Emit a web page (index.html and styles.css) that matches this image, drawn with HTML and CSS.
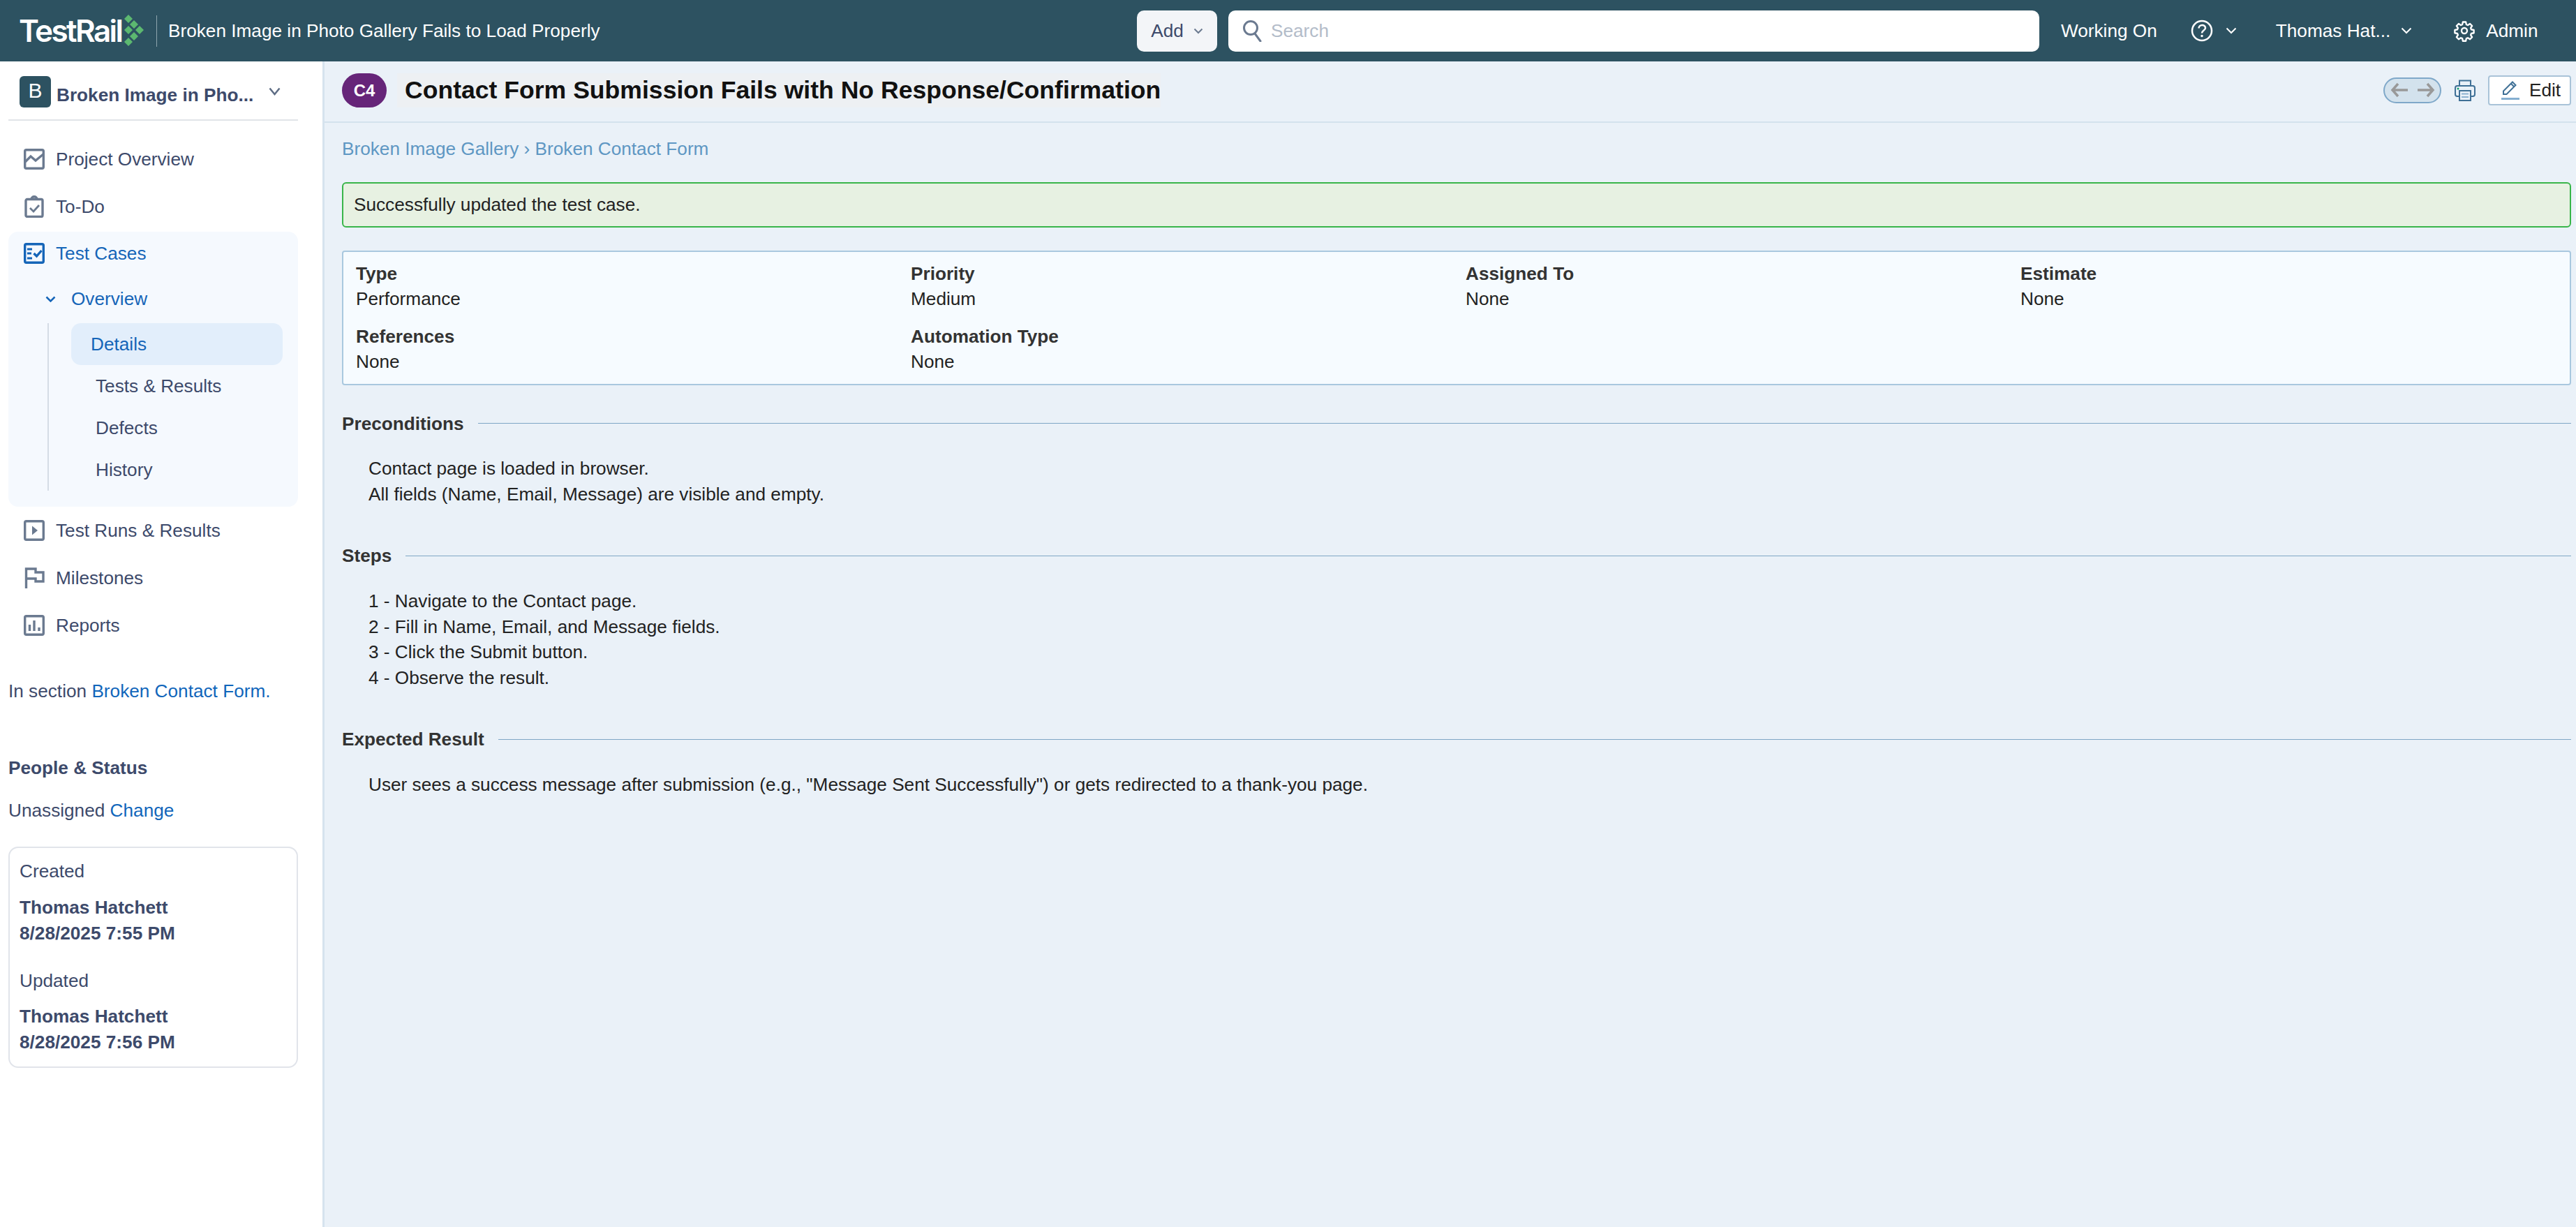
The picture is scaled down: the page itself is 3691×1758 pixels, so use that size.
FILE: index.html
```html
<!DOCTYPE html>
<html lang="en">
<head>
    <meta charset="UTF-8">
    <meta name="viewport" content="width=device-width, initial-scale=1.0">
    <title>Contact Form Submission Fails with No Response/Confirmation</title>
    <link rel="stylesheet" href="styles.css">
</head>
<body>
    <!-- Top bar -->
    <header class="topbar">
        <div class="brand">
            <span class="brand-name">TestRail</span>
            <svg class="brand-mark" width="40" height="46" viewBox="0 0 40 46">
                <g fill="#5cb870">
                    <path d="M12 0l6 6-6 6-6-6z"/>
                    <path d="M20 8l6 6-6 6-6-6z"/>
                    <path d="M12 16l6 6-6 6-6-6z"/>
                    <path d="M28 16l6 6-6 6-6-6z"/>
                    <path d="M20 25l6 6-6 6-6-6z"/>
                    <path d="M12 33l6 6-6 6-6-6z"/>
                </g>
            </svg>
        </div>
        <div class="project-title">Broken Image in Photo Gallery Fails to Load Properly</div>
        <button class="add-button">Add
            <svg width="14" height="9" viewBox="0 0 14 9"><path d="M1.500 1.500L7 7l5.500-5.500" fill="none" stroke="#6b7a90" stroke-width="2"/></svg>
        </button>
        <div class="search-box">
            <svg width="30" height="32" viewBox="0 0 30 32"><circle cx="12" cy="12" r="9.500" fill="none" stroke="#6b7a90" stroke-width="3"/><path d="M18 20l8 11" stroke="#6b7a90" stroke-width="3" stroke-linecap="round"/></svg>
            <span class="search-hint">Search</span>
        </div>
        <span class="top-link working-on">Working On</span>
        <svg class="help-icon" width="32" height="32" viewBox="0 0 32 32"><circle cx="16" cy="16" r="14" fill="none" stroke="#fff" stroke-width="2.500"/><path d="M11.500 12.500c0-6 9.500-6 9.500-.5 0 3.500-5 3.500-5 7.500" fill="none" stroke="#fff" stroke-width="2.500"/><circle cx="16" cy="23.500" r="1.700" fill="#fff"/></svg>
        <svg class="top-chevron help-chevron" width="16" height="10" viewBox="0 0 16 10"><path d="M1.500 1.500L8 8l6.500-6.500" fill="none" stroke="#fff" stroke-width="2"/></svg>
        <span class="top-link user-name">Thomas Hat...</span>
        <svg class="top-chevron user-chevron" width="16" height="10" viewBox="0 0 16 10"><path d="M1.500 1.500L8 8l6.500-6.500" fill="none" stroke="#fff" stroke-width="2"/></svg>
        <svg class="gear-icon" width="30" height="32" viewBox="0 0 24 24" fill="none" stroke="#fff" stroke-width="1.900"><circle cx="12" cy="12" r="3.200"/><path d="M10.300 2h3.400l.6 2.900 1.700.7 2.500-1.600 2.400 2.400-1.600 2.500.7 1.700 2.900.6v3.400l-2.900.6-.7 1.700 1.600 2.500-2.400 2.400-2.500-1.600-1.700.7-.6 2.900h-3.400l-.6-2.900-1.700-.7-2.500 1.600-2.400-2.400 1.600-2.500-.7-1.700-2.900-.6v-3.400l2.900-.6.7-1.700-1.600-2.500 2.400-2.400 2.500 1.600 1.700-.7z" stroke-linejoin="round"/></svg>
        <span class="top-link admin-link">Admin</span>
    </header>

    <div class="layout">
        <!-- Sidebar -->
        <aside class="sidebar">
            <div class="project-switch">
                <span class="project-tile">B</span>
                <span class="project-name">Broken Image in Pho...</span>
                <svg width="17" height="12" viewBox="0 0 17 12"><path d="M1.500 1.500L8.500 10l7-8.500" fill="none" stroke="#5e6d85" stroke-width="2.500"/></svg>
            </div>

            <nav class="nav">
                <a class="nav-item">
                    <svg class="nav-icon" width="30" height="30" viewBox="0 0 30 30" fill="none" stroke="#6b7a90" stroke-width="3.400"><rect x="1.700" y="1.700" width="26.600" height="26.600" rx="2"/><path d="M2 19l8-8 7 6 11-9"/></svg>
                    Project Overview
                </a>
                <a class="nav-item">
                    <svg class="nav-icon" width="30" height="32" viewBox="0 0 30 32" fill="none" stroke="#6b7a90" stroke-width="3.400"><rect x="3" y="5.500" width="24" height="25" rx="2"/><path d="M11 5.500c0-5 8-5 8 0"/><path d="M9 18l5 5 8-9" stroke-width="2.800"/></svg>
                    To-Do
                </a>
                <div class="nav-group">
                    <a class="nav-item nav-item-active nav-group-head">
                        <svg class="nav-icon" width="30" height="30" viewBox="0 0 30 30" fill="none" stroke="#1565b8" stroke-width="3.400"><rect x="1.700" y="1.700" width="26.600" height="26.600" rx="2"/><path d="M5 9h7M5 15h6M5 22h7" stroke-width="2.800"/><path d="M14.500 15l4 4 7-8"/></svg>
                        Test Cases
                    </a>
                    <a class="sub-head">
                        <svg width="15" height="9" viewBox="0 0 15 9"><path d="M1.500 1.500l6 6 6-6" fill="none" stroke="#1565b8" stroke-width="2.500"/></svg>
                        Overview
                    </a>
                    <ul class="sub-list">
                        <li class="sub-item sub-item-active">Details</li>
                        <li class="sub-item">Tests &amp; Results</li>
                        <li class="sub-item">Defects</li>
                        <li class="sub-item">History</li>
                    </ul>
                </div>
                <a class="nav-item">
                    <svg class="nav-icon" width="30" height="30" viewBox="0 0 30 30" fill="none" stroke="#6b7a90" stroke-width="3.400"><rect x="1.700" y="1.700" width="26.600" height="26.600" rx="2"/><path d="M12 8.500l8 6.500-8 6.500z" fill="#6b7a90" stroke="none"/></svg>
                    Test Runs &amp; Results
                </a>
                <a class="nav-item">
                    <svg class="nav-icon" width="30" height="30" viewBox="0 0 30 30" fill="none" stroke="#6b7a90" stroke-width="3.400"><path d="M3.500 30V2H17v5h11v13H17v-4H3.500"/></svg>
                    Milestones
                </a>
                <a class="nav-item">
                    <svg class="nav-icon" width="30" height="30" viewBox="0 0 30 30" fill="none" stroke="#6b7a90" stroke-width="3.400"><rect x="1.700" y="1.700" width="26.600" height="26.600" rx="2"/><path d="M8.500 14v9M15 8v15M22 18v5"/></svg>
                    Reports
                </a>
            </nav>

            <p class="section-note">In section <a class="link">Broken Contact Form.</a></p>

            <h3 class="people-title">People &amp; Status</h3>
            <p class="assignee">Unassigned <a class="link">Change</a></p>

            <div class="audit-card">
                <div class="audit-label">Created</div>
                <div class="audit-value">Thomas Hatchett<br>8/28/2025 7:55 PM</div>
                <div class="audit-label audit-label-next">Updated</div>
                <div class="audit-value">Thomas Hatchett<br>8/28/2025 7:56 PM</div>
            </div>
        </aside>

        <!-- Main content -->
        <main class="content">
            <div class="case-header">
                <span class="case-badge">C4</span>
                <h1 class="case-title">Contact Form Submission Fails with No Response/Confirmation</h1>
                <div class="case-actions">
                    <span class="pager">
                        <svg width="28" height="24" viewBox="0 0 28 24" fill="none" stroke="#999" stroke-width="3.500"><path d="M11 3L3 12l8 9M3 12h22"/></svg>
                        <svg width="28" height="24" viewBox="0 0 28 24" fill="none" stroke="#999" stroke-width="3.500"><path d="M17 3l8 9-8 9M25 12H3"/></svg>
                    </span>
                    <svg class="print-icon" width="30" height="31" viewBox="0 0 30 31" fill="none" stroke="#3f7096" stroke-width="2"><path d="M7 9V1.500h16V9"/><rect x="1" y="9" width="28" height="15" rx="3"/><rect x="7" y="16" width="16" height="14" fill="#eaf1f8"/><path d="M10 20.500h10M10 25h10" stroke="#8db2d0"/><circle cx="5" cy="13" r="1.500" fill="#12a06e" stroke="none"/></svg>
                    <button class="edit-button">
                        <svg width="26" height="28" viewBox="0 0 26 28" fill="none" stroke="#3f7096" stroke-width="2"><path d="M3 20v-4.500L16 2.500l4.500 4.500L7.500 20z"/><path d="M14 5l4.500 4.500"/><path d="M0 26.500h26" stroke="#85afd0" stroke-width="3"/></svg>
                        Edit
                    </button>
                </div>
            </div>

            <div class="breadcrumb"><a>Broken Image Gallery</a> › <a>Broken Contact Form</a></div>

            <div class="alert-success">Successfully updated the test case.</div>

            <div class="info-box">
                <div class="info-field"><strong>Type</strong><span>Performance</span></div>
                <div class="info-field"><strong>Priority</strong><span>Medium</span></div>
                <div class="info-field"><strong>Assigned To</strong><span>None</span></div>
                <div class="info-field"><strong>Estimate</strong><span>None</span></div>
                <div class="info-field"><strong>References</strong><span>None</span></div>
                <div class="info-field"><strong>Automation Type</strong><span>None</span></div>
            </div>

            <section class="case-section">
                <h2 class="section-head">Preconditions</h2>
                <p class="section-body">Contact page is loaded in browser.<br>All fields (Name, Email, Message) are visible and empty.</p>
            </section>

            <section class="case-section">
                <h2 class="section-head">Steps</h2>
                <p class="section-body">1 - Navigate to the Contact page.<br>2 - Fill in Name, Email, and Message fields.<br>3 - Click the Submit button.<br>4 - Observe the result.</p>
            </section>

            <section class="case-section">
                <h2 class="section-head">Expected Result</h2>
                <p class="section-body">User sees a success message after submission (e.g., "Message Sent Successfully") or gets redirected to a thank-you page.</p>
            </section>
        </main>
    </div>
</body>
</html>
```
FILE: styles.css
```css
* {
    box-sizing: border-box;
}

html, body {
    margin: 0;
    height: 100%;
}

body {
    font-family: "Liberation Sans", Arial, sans-serif;
    font-size: 26.2px;
    line-height: 36.6px;
    color: #222;
    background-color: #eaf1f8;
    display: flex;
    flex-direction: column;
    overflow: hidden;
}

/* Top bar */
.topbar {
    height: 88px;
    flex: none;
    background-color: #2d5261;
    color: #fff;
    display: flex;
    align-items: center;
}

.brand {
    width: 224px;
    height: 45px;
    margin-left: 27px;
    display: flex;
    align-items: center;
    flex: none;
}

.brand-name {
    font-family: Inter, sans-serif;
    font-size: 44px;
    font-weight: 600;
    letter-spacing: -2.6px;
    line-height: 45px;
}

.brand-mark {
    margin-left: -2px;
}

.project-title {
    flex: none;
    width: 1405px;
    margin-left: -27px;
    padding-left: 16px;
    border-left: 1px solid #8fa5af;
    line-height: 45px;
    height: 45px;
}

.add-button {
    width: 115px;
    height: 59px;
    flex: none;
    background-color: #f3f5f8;
    border: none;
    border-radius: 10px;
    font-family: inherit;
    font-size: 26.2px;
    color: #3d4a6b;
    display: flex;
    align-items: center;
    justify-content: center;
    gap: 14px;
    padding: 0;
}

.search-box {
    width: 1162px;
    height: 59px;
    flex: none;
    margin-left: 16px;
    background-color: #fff;
    border-radius: 10px;
    padding-left: 20px;
    display: flex;
    align-items: center;
    gap: 11px;
}

.search-hint {
    color: #b3bcc9;
}

.top-link {
    flex: none;
    white-space: nowrap;
}

.working-on {
    margin-left: 31px;
}

.help-icon {
    margin-left: 48px;
    flex: none;
}

.help-chevron {
    margin-left: 18px;
}

.user-name {
    margin-left: 56px;
}

.user-chevron {
    margin-left: 15px;
}

.gear-icon {
    margin-left: 60px;
    flex: none;
}

.admin-link {
    margin-left: 16px;
}

.top-chevron {
    flex: none;
}

/* Layout */
.layout {
    flex: 1;
    display: flex;
    min-height: 0;
}

.sidebar {
    width: 465px;
    flex: none;
    background-color: #fff;
    border-right: 3px solid #d6e3ee;
    padding: 0 35px 0 12px;
    color: #3d4a6b;
}

.project-switch {
    height: 85px;
    border-bottom: 2px solid #e1e4e8;
    display: flex;
    align-items: flex-start;
    padding: 21px 0 0 16px;
}

.project-tile {
    width: 45px;
    height: 45px;
    flex: none;
    border-radius: 6px;
    background-color: #2d5261;
    color: #fff;
    font-size: 30px;
    line-height: 42px;
    text-align: center;
}

.project-name {
    margin: 9px 0 0 8px;
    width: 304px;
    font-weight: bold;
    white-space: nowrap;
}

.project-switch svg {
    margin-top: 16px;
}

.nav {
    margin-top: 21px;
}

.nav-item {
    height: 68px;
    display: flex;
    align-items: center;
    padding-left: 22px;
    gap: 16px;
}

.nav-icon {
    flex: none;
    width: 30px;
}

.nav-item-active {
    color: #1565b8;
}

.nav-group {
    margin: 2px 0 0;
    padding-bottom: 23px;
    background-color: #f5f9fe;
    border-radius: 14px;
}

.nav-group-head {
    height: 62px;
}

.sub-head {
    height: 69px;
    display: flex;
    align-items: center;
    padding-left: 53px;
    gap: 22px;
    color: #1565b8;
}

.sub-list {
    list-style: none;
    margin: 0 0 0 56px;
    padding: 0 22px 0 32px;
    border-left: 2px solid #d5dce6;
}

.sub-item {
    height: 60px;
    line-height: 60px;
    padding-left: 35px;
}

.sub-item-active {
    padding-left: 28px;
    background-color: #e2eefb;
    border-radius: 14px;
    color: #1565b8;
}

.link {
    color: #1166bb;
}

.section-note {
    margin: 42px 0 0;
}

.people-title {
    margin: 73px 0 0;
    font-size: 26.2px;
    line-height: 36.6px;
}

.assignee {
    margin: 25px 0 0;
}

.audit-card {
    height: 317px;
    margin-top: 33px;
    padding: 15px 14px;
    border: 2px solid #e1e4ea;
    border-radius: 14px;
}

.audit-label {
    margin-bottom: 16px;
}

.audit-label-next {
    margin: 31px 0 15px;
}

.audit-value {
    font-weight: bold;
}

/* Main content */
.content {
    flex: 1;
    min-width: 0;
    padding: 0 7px 0 25px;
}

.case-header {
    height: 88px;
    margin-left: -25px;
    margin-right: -7px;
    padding: 0 7px 4px 25px;
    border-bottom: 2px solid #d3e2ed;
    display: flex;
    align-items: center;
}

.case-badge {
    width: 64px;
    height: 49px;
    flex: none;
    border-radius: 25px;
    background-color: #662579;
    color: #fff;
    font-size: 24px;
    font-weight: bold;
    line-height: 49px;
    text-align: center;
}

.case-title {
    margin: 0 0 0 15px;
    padding-left: 11px;
    font-size: 35.6px;
    line-height: 49px;
    color: #111;
    background-color: #edf0f3;
}

.case-actions {
    margin-left: auto;
    display: flex;
    align-items: center;
}

.pager {
    width: 83px;
    height: 37px;
    border: 2px solid #7fa8c9;
    border-radius: 19px;
    background-color: #d3e2ed;
    display: flex;
    align-items: center;
    justify-content: center;
    gap: 8px;
}

.print-icon {
    margin-left: 19px;
}

.edit-button {
    width: 119px;
    height: 43px;
    margin-left: 18px;
    padding: 0 0 0 17px;
    background-color: #fff;
    border: 2px solid #a9c3d8;
    border-radius: 4px;
    font-family: inherit;
    font-size: 26.2px;
    color: #222;
    display: flex;
    align-items: center;
    gap: 14px;
}

.breadcrumb {
    margin-top: 19px;
    color: #5e97c3;
}

.alert-success {
    height: 65px;
    margin-top: 29px;
    padding: 0 15px;
    line-height: 60px;
    background-color: #e7f1e2;
    border: 2px solid #39b54a;
    border-radius: 6px;
}

.info-box {
    height: 193px;
    margin-top: 33px;
    padding: 13px 0 0 18px;
    background-color: #f6fbff;
    border: 2px solid #a9c8df;
    border-radius: 4px;
    display: grid;
    grid-template-columns: repeat(4, 795px);
    grid-auto-rows: 90px;
}

.info-field strong,
.info-field span {
    display: block;
}

.info-field strong {
    color: #333;
}

.case-section {
    margin-top: 52px;
}

.info-box + .case-section {
    margin-top: 37px;
}

.section-head {
    margin: 0;
    font-size: 26.2px;
    line-height: 36.6px;
    color: #333;
    display: flex;
    align-items: center;
    gap: 20px;
}

.section-head::after {
    content: "";
    flex: 1;
    height: 1px;
    background-color: #7fa6c6;
}

.section-body {
    margin: 28px 0 0;
    padding-left: 38px;
}
```
